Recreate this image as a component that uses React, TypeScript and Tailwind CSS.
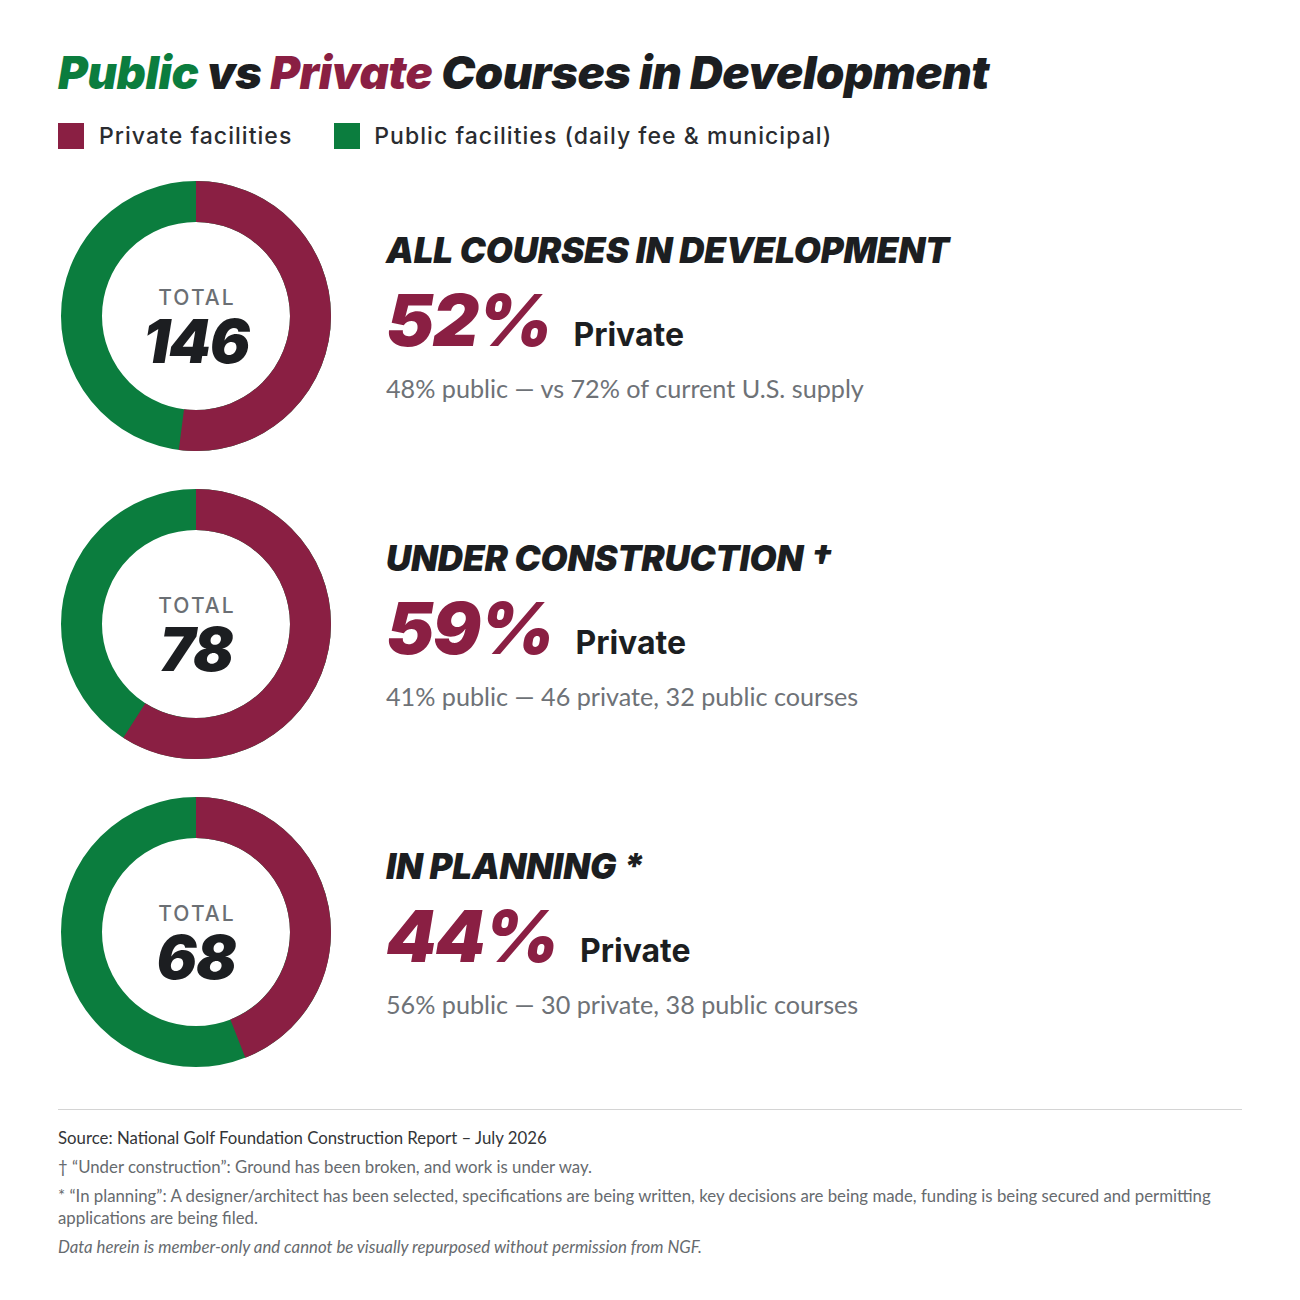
const maroon = "#8a1f43";

type Row = {
  title: string;
  total: number;
  pct: number;
  note: string;
};

const rows: Row[] = [
  { title: "ALL COURSES IN DEVELOPMENT", total: 146, pct: 52, note: "48% public — vs 72% of current U.S. supply" },
  { title: "UNDER CONSTRUCTION †", total: 78, pct: 59, note: "41% public — 46 private, 32 public courses" },
  { title: "IN PLANNING *", total: 68, pct: 44, note: "56% public — 30 private, 38 public courses" },
];

const Donut = ({ pct, total }: { pct: number; total: number }) => {
  const r = 114.5;
  const c = 2 * Math.PI * r;
  return (
    <div className="relative w-[270px] h-[270px] shrink-0">
      <svg width="270" height="270" viewBox="0 0 270 270">
        <circle cx="135" cy="135" r={r} fill="none" stroke="#0b7d3e" strokeWidth="41" />
        <circle
          cx="135"
          cy="135"
          r={r}
          fill="none"
          stroke={maroon}
          strokeWidth="41"
          strokeDasharray={`${(c * pct) / 100} ${c}`}
          transform="rotate(-90 135 135)"
        />
      </svg>
      <div className="absolute inset-0 flex flex-col items-center justify-center pt-[29px]">
        <div className="font-['Inter'] font-medium text-[21px] leading-none tracking-[0.1em] text-[#6b6f74] pl-[2px]">
          TOTAL
        </div>
        <div className="font-['Inter'] font-black italic text-[60px] leading-[1.1] tracking-[-0.02em] text-[#1c1e21]">
          {total}
        </div>
      </div>
    </div>
  );
};

export default function App() {
  return (
    <div className="w-[1300px] h-[1300px] bg-white px-[58px] pt-[50px] font-['Inter',sans-serif]">
      <h1 className="font-['Inter'] font-black italic text-[45.5px] leading-none tracking-[-0.01em] text-[#1c1e21]">
        <span className="text-[#0b7d3e]">Public</span> vs <span className="text-[#8a1f43]">Private</span> Courses in Development
      </h1>
      <div className="flex items-center mt-[23px] text-[23px] tracking-[0.045em] text-[#2a2c30] font-['Inter'] font-medium">
        <div className="flex items-center gap-[15px]">
          <span className="w-[26px] h-[26px] bg-[#8a1f43]" />
          Private facilities
        </div>
        <div className="flex items-center gap-[14px] ml-[42px]">
          <span className="w-[26px] h-[26px] bg-[#0b7d3e]" />
          Public facilities (daily fee &amp; municipal)
        </div>
      </div>

      <div className="flex flex-col gap-[38px] mt-[28px] pl-[3px]">
        {rows.map((row) => (
          <div key={row.title} className="flex items-center">
            <Donut pct={row.pct} total={row.total} />
            <div className="ml-[55px] flex flex-col pt-[2px]">
              <div className="font-['Inter'] font-black italic text-[35px] leading-none tracking-[-0.005em] text-[#1c1e21]">
                {row.title}
              </div>
              <div className="flex items-baseline mt-[16px]">
                <span className="font-['Inter'] font-black italic text-[72px] leading-none tracking-[-0.02em] text-[#8a1f43]">
                  {row.pct}%
                </span>
                <span className="font-['Inter'] font-bold text-[32px] leading-none text-[#1c1e21] ml-[22px]">
                  Private
                </span>
              </div>
              <div className="font-['Lato'] text-[25.2px] leading-none text-[#6e7277] mt-[20px]">{row.note}</div>
            </div>
          </div>
        ))}
      </div>

      <div className="border-t border-[#d4d4d4] mt-[42px] pt-[17px] font-['Lato'] text-[16.8px] leading-[22px] text-[#666a6e]">
        <p className="text-[#333538]">Source: National Golf Foundation Construction Report – July 2026</p>
        <p className="mt-[7px]">† “Under construction”: Ground has been broken, and work is under way.</p>
        <p className="mt-[7px]">
          * “In planning”: A designer/architect has been selected, specifications are being written, key decisions are being made, funding is being secured and permitting applications are being filed.
        </p>
        <p className="mt-[7px] italic">Data herein is member-only and cannot be visually repurposed without permission from NGF.</p>
      </div>
    </div>
  );
}
